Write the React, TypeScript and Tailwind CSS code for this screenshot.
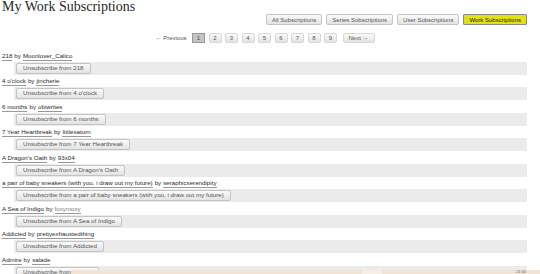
import React from 'react';

const items = [
  { title: '218', author: 'Moonlover_Calico' },
  { title: "4 o'clock", author: 'jincherie' },
  { title: '6 months', author: 'obiwrites' },
  { title: '7 Year Heartbreak', author: 'littlesaturn' },
  { title: "A Dragon's Oath", author: '93x04' },
  { title: 'a pair of baby sneakers (with you, i draw out my future)', author: 'seraphicserendipity' },
  { title: 'A Sea of Indigo', author: 'foxymoxy', visited: true },
  { title: 'Addicted', author: 'prettyexhaustedthing' },
  { title: 'Admire', author: 'salade' },
];

const navs = ['All Subscriptions', 'Series Subscriptions', 'User Subscriptions', 'Work Subscriptions'];
const pages = ['1', '2', '3', '4', '5', '6', '7', '8', '9'];

const btn =
  'border border-[#c4c4c4] rounded-[2px] bg-gradient-to-b from-[#fafafa] to-[#e3e3e3] text-[#555] leading-none flex items-center';

export default function App() {
  return (
    <div
      className="relative w-[540px] h-[274px] overflow-hidden bg-white text-[#2a2a2a]"
      style={{ fontFamily: '"Liberation Sans", Arial, sans-serif' }}
    >
      <h1
        className="pl-[2px] h-[14px] leading-[14px] text-[14px] text-[#2a2a2a]"
        style={{ fontFamily: '"Liberation Serif", "Times New Roman", serif' }}
      >
        My Work Subscriptions
      </h1>

      <div className="flex justify-end gap-[4px] pr-[13px] h-[11px]">
        {navs.map((n, i) => {
          const on = i === navs.length - 1;
          return (
            <span
              key={n}
              className={
                on
                  ? 'border border-[#8a8a8a] rounded-[1px] bg-[#e0e013] text-[#222] text-[6px] px-[5px] flex items-center leading-none'
                  : `${btn} text-[6px] px-[5px]`
              }
            >
              {n}
            </span>
          );
        })}
      </div>

      <div className="flex justify-center items-center gap-[3.5px] pr-[10px] mt-[8px] h-[10px] text-[6px]">
        <span className="text-[#555] mr-[2px]">← Previous</span>
        {pages.map((p) => (
          <span
            key={p}
            className={
              p === '1'
                ? 'w-[13px] h-[10px] border border-[#999] bg-[#c4c4c4] text-[#444] flex items-center justify-center leading-none'
                : `${btn} w-[13px] h-[10px] justify-center border-[#d8d8d8]`
            }
          >
            {p}
          </span>
        ))}
        <span className={`${btn} h-[10px] px-[5px] ml-[2px] border-[#d8d8d8]`}>Next →</span>
      </div>

      <dl className="mt-[6px] text-[6.2px]">
        {items.map((it) => (
          <div key={it.title}>
            <dt className="h-[12.5px] pl-[2px] flex items-end pb-[1px]">
              <span className="border-b border-[#999] leading-[8px]">{it.title}</span>
              <span className="mx-[2px] border-b border-transparent leading-[8px]">by</span>
              <span className={`border-b border-[#999] leading-[8px] ${it.visited ? 'text-[#777]' : ''}`}>
                {it.author}
              </span>
            </dt>
            <dd className="h-[13px] ml-[14px] mr-[13px] bg-[#ebebeb] flex items-center pl-[2px]">
              <span className={`${btn} h-[11px] px-[6px]`}>Unsubscribe from {it.title}</span>
            </dd>
          </div>
        ))}
      </dl>

      <div className="absolute bottom-0 left-[71px] right-0 h-[4px] bg-[#efe4d6] flex">
        <div className="ml-[291px] w-[20px] bg-[#f6efe6]" />
        <div className="ml-auto mr-[14px] text-[4px] leading-[4px] text-[#666]">21:30</div>
      </div>
    </div>
  );
}
